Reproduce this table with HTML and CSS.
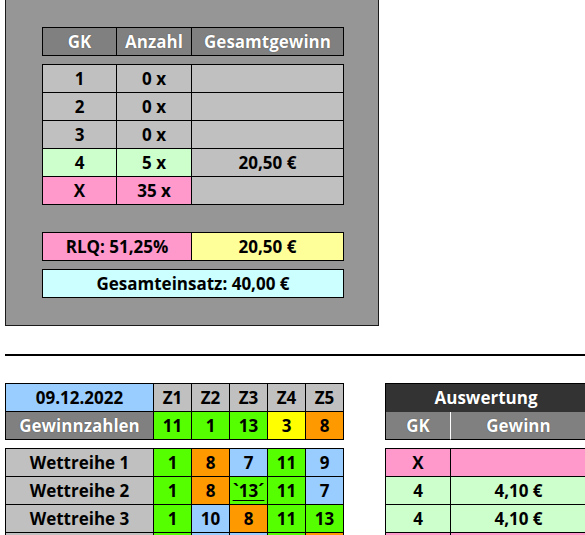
FILE: index.html
```html
<!DOCTYPE html>
<html lang="de">
<head>
    <meta charset="UTF-8">
    <title>Auswertung</title>
    <link rel="stylesheet" href="styles.css">
</head>
<body>
    <div class="summary-panel">
        <div class="grid cols-3">
            <div class="cell head">GK</div>
            <div class="cell head">Anzahl</div>
            <div class="cell head">Gesamtgewinn</div>
        </div>
        <div class="grid cols-3 gap-small">
            <div class="cell gray">1</div>
            <div class="cell gray">0 x</div>
            <div class="cell gray"></div>
            <div class="cell gray">2</div>
            <div class="cell gray">0 x</div>
            <div class="cell gray"></div>
            <div class="cell gray">3</div>
            <div class="cell gray">0 x</div>
            <div class="cell gray"></div>
            <div class="cell mint">4</div>
            <div class="cell mint">5 x</div>
            <div class="cell gray">20,50 €</div>
            <div class="cell pink">X</div>
            <div class="cell pink">35 x</div>
            <div class="cell gray"></div>
        </div>
        <div class="grid cols-rlq gap-large">
            <div class="cell pink">RLQ: 51,25%</div>
            <div class="cell lemon">20,50 €</div>
        </div>
        <div class="grid cols-1 gap-small">
            <div class="cell cyan">Gesamteinsatz: 40,00 €</div>
        </div>
    </div>

    <hr class="divider">

    <div class="draw-section">
        <div class="draw-left">
            <div class="grid cols-draw">
                <div class="cell blue">09.12.2022</div>
                <div class="cell gray">Z1</div>
                <div class="cell gray">Z2</div>
                <div class="cell gray">Z3</div>
                <div class="cell gray">Z4</div>
                <div class="cell gray">Z5</div>
                <div class="cell head">Gewinnzahlen</div>
                <div class="cell green">11</div>
                <div class="cell green">1</div>
                <div class="cell green">13</div>
                <div class="cell yellow">3</div>
                <div class="cell orange">8</div>
            </div>
            <div class="grid cols-draw gap-small">
                <div class="cell gray">Wettreihe 1</div>
                <div class="cell green">1</div>
                <div class="cell orange">8</div>
                <div class="cell blue">7</div>
                <div class="cell green">11</div>
                <div class="cell blue">9</div>

                <div class="cell gray">Wettreihe 2</div>
                <div class="cell green">1</div>
                <div class="cell orange">8</div>
                <div class="cell green"><span class="marked">`13´</span></div>
                <div class="cell green">11</div>
                <div class="cell blue">7</div>

                <div class="cell gray">Wettreihe 3</div>
                <div class="cell green">1</div>
                <div class="cell blue">10</div>
                <div class="cell orange">8</div>
                <div class="cell green">11</div>
                <div class="cell green">13</div>

                <div class="cell gray">Wettreihe 4</div>
                <div class="cell green">1</div>
                <div class="cell blue">9</div>
                <div class="cell blue">7</div>
                <div class="cell green">11</div>
                <div class="cell orange">8</div>
            </div>
        </div>

        <div class="draw-right">
            <div class="grid cols-eval">
                <div class="cell dark span-2">Auswertung</div>
                <div class="cell head split">GK</div>
                <div class="cell head">Gewinn</div>
            </div>
            <div class="grid cols-eval gap-small">
                <div class="cell pink">X</div>
                <div class="cell pink"></div>
                <div class="cell mint">4</div>
                <div class="cell mint">4,10 €</div>
                <div class="cell mint">4</div>
                <div class="cell mint">4,10 €</div>
                <div class="cell pink">X</div>
                <div class="cell pink"></div>
            </div>
        </div>
    </div>
</body>
</html>
```

FILE: styles.css
```css
html, body {
    overflow: hidden;
}
body {
    margin: 0;
    background-color: white;
    font-family: "Open Sans", "Noto Sans", sans-serif;
    font-weight: bold;
    font-size: 17px;
    color: black;
}
.summary-panel {
    box-sizing: border-box;
    width: 374px;
    height: 326px;
    margin-left: 5px;
    padding: 27px 0 0 36px;
    background-color: #969696;
    border: 1px solid #1a1a1a;
    border-top: none;
}
.grid {
    display: grid;
    width: max-content;
    border-left: 1px solid black;
    border-top: 1px solid black;
}
.gap-small {
    margin-top: 8px;
}
.gap-large {
    margin-top: 27px;
}
.cols-3 {
    grid-template-columns: 74px 75px 152px;
}
.cols-rlq {
    grid-template-columns: 149px 152px;
}
.cols-1 {
    grid-template-columns: 301px;
}
.cols-draw {
    grid-template-columns: 148px 38px 38px 38px 38px 38px;
}
.cols-eval {
    grid-template-columns: 65px 136px;
}
.cell {
    box-sizing: border-box;
    height: 28px;
    border-right: 1px solid black;
    border-bottom: 1px solid black;
    display: flex;
    align-items: center;
    justify-content: center;
    line-height: 1;
    padding-bottom: 1px;
    white-space: nowrap;
}
.head {
    background-color: #808080;
    color: white;
    text-shadow: 0 0 1px rgba(0,0,0,0.6);
}
.dark {
    background-color: #333333;
    color: white;
    border-bottom: none;
    text-shadow: 0 0 1px rgba(0,0,0,0.6);
}
.span-2 {
    grid-column: span 2;
}
.split {
    border-right-color: white;
}
.gray { background-color: #c0c0c0; }
.mint { background-color: #ccffcc; }
.pink { background-color: #ff99cc; }
.lemon { background-color: #ffff99; }
.cyan { background-color: #ccffff; }
.blue { background-color: #99ccff; }
.green { background-color: #55ff00; }
.orange { background-color: #ff9900; }
.yellow { background-color: #ffff00; }
.marked {
    text-decoration: underline;
    text-decoration-thickness: 1px;
    text-underline-offset: 3px;
}
.divider {
    margin: 28px 0 0 5px;
    border: none;
    height: 2px;
    background-color: black;
}
.draw-section {
    display: flex;
    gap: 41px;
    margin-top: 27px;
    padding-left: 5px;
}
.draw-right {
    flex-shrink: 0;
}
```
